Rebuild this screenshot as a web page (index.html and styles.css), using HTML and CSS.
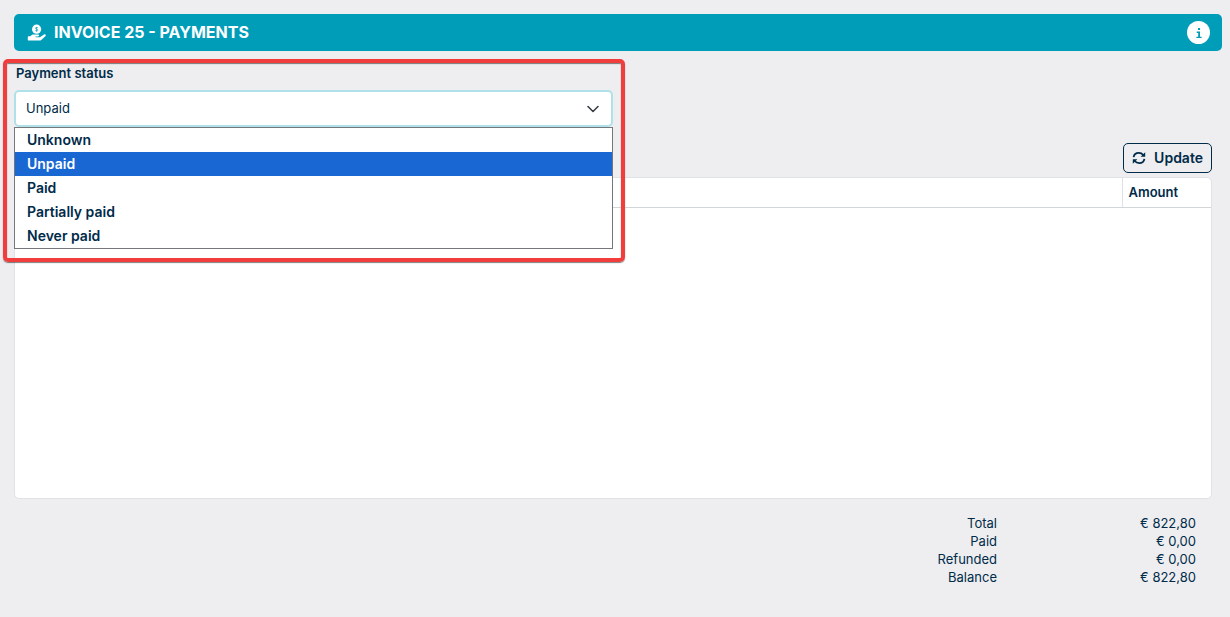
FILE: index.html
```html
<!DOCTYPE html>
<html lang="en">
<head>
<meta charset="utf-8">
<meta name="viewport" content="width=device-width, initial-scale=1">
<title>Invoice 25 - Payments</title>
<link rel="stylesheet" href="styles.css">
</head>
<body>
<header class="titlebar">
  <svg class="titlebar-icon" viewBox="0 0 20 18" aria-hidden="true">
    <circle cx="9.6" cy="5.2" r="4.6" fill="currentColor"/>
    <path d="M11 3.9C10.3 3.3 8.4 3.3 8.4 4.3C8.4 5.4 10.9 5 10.9 6.2C10.9 7.2 8.9 7.1 8.2 6.5M9.6 2.9V7.6" fill="none" stroke="#009db8" stroke-width=".7"/>
    <path d="M1.4 12.2H3.2L4.8 11.1C5.4 10.7 6 10.6 6.7 10.6H11.1C12.5 10.6 12.5 12.5 11.1 12.5H8.6V13.2H12.9L16.9 10.5C18.4 9.6 19.6 11.2 18.3 12.3L14.6 15.7C13.9 16.3 13.2 16.6 12.3 16.6H1.4C1 16.6 .8 16.4 .8 16V12.8C.8 12.4 1 12.2 1.4 12.2Z" fill="currentColor"/>
  </svg>
  <h1 class="titlebar-text">INVOICE 25 - PAYMENTS</h1>
  <button class="info" type="button" aria-label="Information">
    <svg class="info-icon" viewBox="0 0 10 12" aria-hidden="true">
      <path d="M4 1H6V3H4ZM2.7 4.6H6V9.7H7.6V11H2.4V9.7H4.2V6H2.7Z" fill="currentColor"/>
    </svg>
  </button>
</header>
<main class="content">
  <div class="field">
    <label class="field-label" for="status">Payment status</label>
    <select class="field-select" id="status">
      <option>Unknown</option>
      <option selected>Unpaid</option>
      <option>Paid</option>
      <option>Partially paid</option>
      <option>Never paid</option>
    </select>
    <svg class="field-arrow" viewBox="0 0 12 12" aria-hidden="true"><path d="M1 3.5L6 8.5L11 3.5" fill="none" stroke="currentColor" stroke-width="1.5" stroke-linecap="round" stroke-linejoin="round"/></svg>
    <ul class="options" role="listbox" aria-label="Payment status">
      <li class="option" role="option" aria-selected="false">Unknown</li>
      <li class="option option-active" role="option" aria-selected="true">Unpaid</li>
      <li class="option" role="option" aria-selected="false">Paid</li>
      <li class="option" role="option" aria-selected="false">Partially paid</li>
      <li class="option" role="option" aria-selected="false">Never paid</li>
    </ul>
    <div class="highlight"></div>
  </div>
  <div class="toolbar">
    <button class="update" type="button">
      <svg class="update-icon" viewBox="0 0 14 14" aria-hidden="true">
        <path d="M1.6 6.2C2 3.6 4.2 1.9 6.8 1.9C8.7 1.9 10.2 2.7 11.3 4M12.4 7.8C12 10.4 9.8 12.1 7.2 12.1C5.3 12.1 3.8 11.3 2.7 10" fill="none" stroke="currentColor" stroke-width="1.8"/>
        <path d="M13.2 1.2V5.8H8.6ZM.8 12.8V8.2H5.4Z" fill="currentColor"/>
      </svg>
      Update
    </button>
  </div>
  <div class="panel">
    <table class="grid">
      <thead><tr><th class="grid-main"></th><th class="grid-amount">Amount</th></tr></thead>
    </table>
  </div>
  <table class="totals">
    <tbody>
      <tr><th>Total</th><td>€ 822,80</td></tr>
      <tr><th>Paid</th><td>€ 0,00</td></tr>
      <tr><th>Refunded</th><td>€ 0,00</td></tr>
      <tr><th>Balance</th><td>€ 822,80</td></tr>
    </tbody>
  </table>
</main>
</body>
</html>
```
FILE: styles.css
```css
* { box-sizing: border-box; }
body {
  margin: 0;
  padding: 14px 8px 31px 14px;
  min-height: 100vh;
  display: flex;
  flex-direction: column;
  background: #eeeef0;
  color: #002b49;
  font: 13px/18px Inter, sans-serif;
}
.titlebar {
  display: flex;
  align-items: center;
  padding: 7px 12px 7px 13px;
  border-radius: 5px;
  background: #009db8;
  color: #fff;
}
.titlebar-icon { width: 20px; height: 18px; margin-right: 7px; }
.titlebar-text { margin: 0; flex: 1; font-size: 16px; line-height: 23px; font-weight: 700; }
.info {
  display: flex;
  align-items: center;
  justify-content: center;
  width: 23px;
  height: 23px;
  padding: 0;
  border: 0;
  border-radius: 50%;
  background: #fff;
  color: #009db8;
}
.info-icon { width: 10px; height: 12px; }
.content {
  flex: 1;
  display: flex;
  flex-direction: column;
  margin-right: 10px;
  padding-top: 13px;
}
.field {
  position: relative;
  width: 50%;
  display: flex;
  flex-direction: column;
  gap: 8px;
}
.field-label { padding-left: 2px; font-weight: 600; }
.field-select {
  appearance: none;
  width: 100%;
  height: 37px;
  padding: 0 32px 1px 10px;
  border: 2px solid #b0e0e8;
  border-radius: 5px;
  background: #fff;
  color: inherit;
  font: inherit;
}
.field-arrow {
  position: absolute;
  right: 14px;
  bottom: 12px;
  width: 12px;
  height: 12px;
  color: #343a40;
  pointer-events: none;
}
.options {
  position: absolute;
  z-index: 1;
  top: 100%;
  left: 0;
  right: 0;
  margin: 0;
  padding: 0;
  border: 1px solid #76777a;
  background: #fff;
  list-style: none;
}
.option { padding: 0 12px; font-size: 14px; line-height: 24px; font-weight: 600; }
.option-active { background: #1967d2; color: #fff; }
.highlight {
  position: absolute;
  z-index: 2;
  top: -5px;
  left: -11px;
  right: -12px;
  height: 203px;
  border: 4px solid #f23d3d;
  border-radius: 5px;
  box-shadow: 0 1px 1px rgba(0, 0, 0, .5), inset 0 1px 1px rgba(0, 0, 0, .5);
  pointer-events: none;
}
.toolbar { display: flex; justify-content: flex-end; padding: 16px 0 4px; }
.update {
  display: flex;
  align-items: center;
  gap: 8px;
  height: 30px;
  padding: 0 8px 1px;
  border: 1px solid #002b49;
  border-radius: 5px;
  background: transparent;
  color: inherit;
  font: 600 14px/20px Inter, sans-serif;
}
.update-icon { width: 14px; height: 14px; }
.panel {
  flex: 1;
  border: 1px solid #dfe3e6;
  border-radius: 5px;
  background: #fff;
}
.grid { width: 100%; border-collapse: collapse; table-layout: fixed; }
.grid th { height: 29px; padding: 0 6px; border-bottom: 1px solid #d3d6d8; text-align: left; font-weight: 600; }
.grid .grid-amount { width: 89px; border-left: 1px solid #dee2e6; }
.totals { margin: 15px 16px 0 auto; border-collapse: collapse; text-align: right; }
.totals th { padding: 0; font-weight: 400; }
.totals td { width: 199px; padding: 0; }
```
